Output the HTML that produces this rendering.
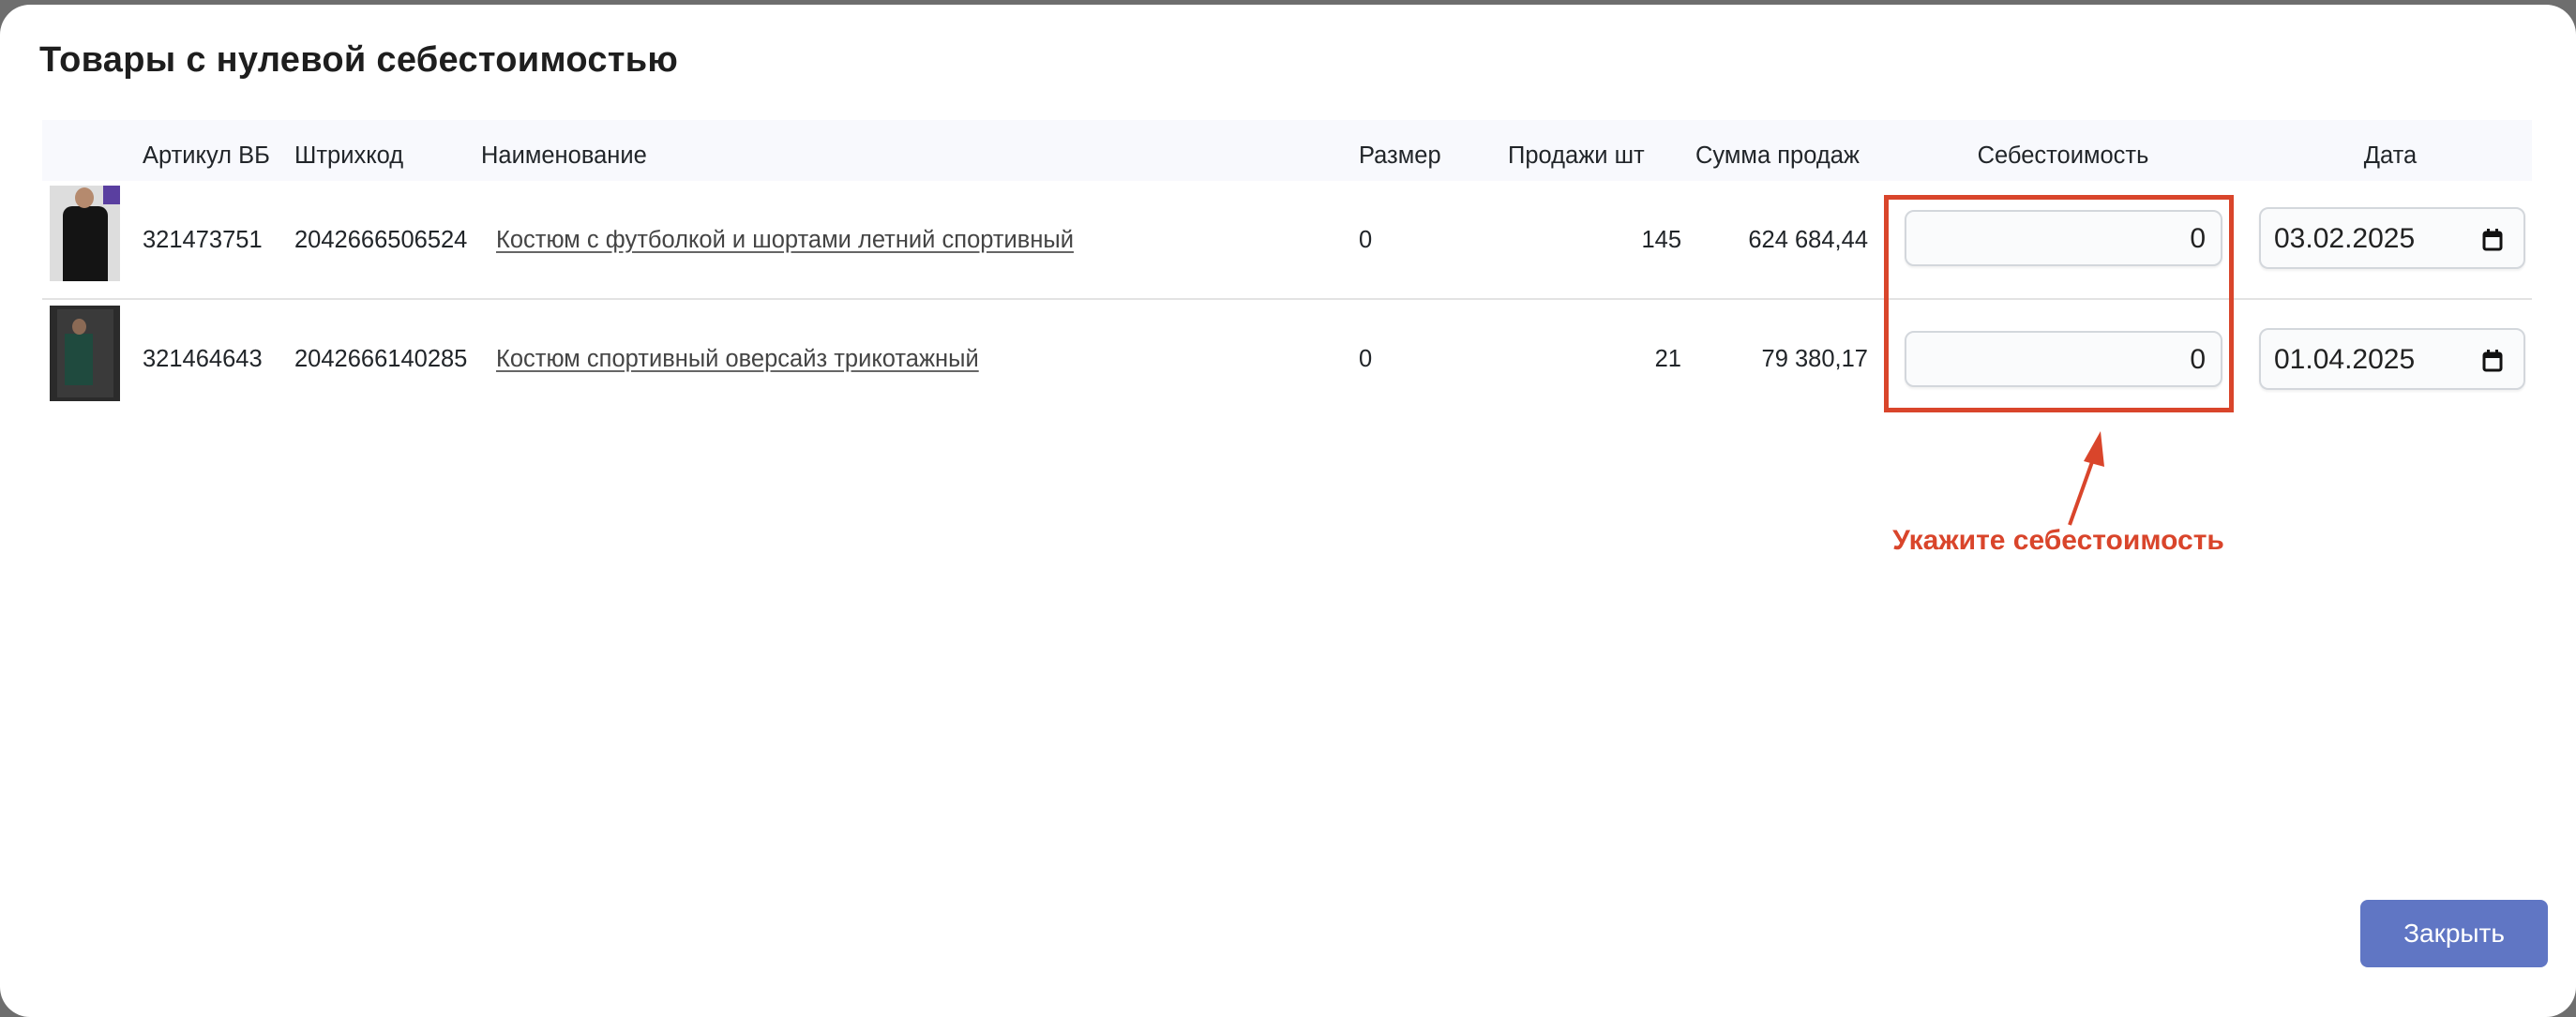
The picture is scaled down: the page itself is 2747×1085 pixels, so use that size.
<!DOCTYPE html>
<html><head><meta charset="utf-8"><style>
*{margin:0;padding:0;box-sizing:border-box}
body{width:2747px;height:1055px;background:#6e6e6e;font-family:"Liberation Sans",sans-serif;color:#212529;position:relative;overflow:hidden}
.modal{position:absolute;left:0;top:5px;width:2747px;height:1080px;background:#fff;border-radius:32px}
.a{position:absolute;white-space:nowrap}
.t{font-size:25.5px;line-height:30px}
.hd{position:absolute;left:45px;top:128px;width:2655px;height:65px;background:#f8f9fd}
.sep{position:absolute;left:45px;top:318px;width:2655px;height:2px;background:#e3e3e3}
.lnk{color:#444;text-decoration:underline;text-decoration-color:#666;text-underline-offset:4px}
.inp{position:absolute;border:2px solid #d3d7dc;border-radius:10px;background:#fafbfc;font-size:30px;color:#222;box-shadow:0 2px 2px rgba(0,0,0,.06)}
.img{position:absolute;background:#e9e9e9;overflow:hidden}
</style></head><body>
<div class="modal"></div>
<div class="a" style="left:42px;top:43px;font-size:38px;font-weight:bold;color:#1e1e1e;letter-spacing:0.3px">Товары с нулевой себестоимостью</div>
<div class="hd"></div>
<div class="a t" style="left:152px;top:151px">Артикул ВБ</div>
<div class="a t" style="left:314px;top:151px">Штрихкод</div>
<div class="a t" style="left:513px;top:151px">Наименование</div>
<div class="a t" style="left:1449px;top:151px">Размер</div>
<div class="a t" style="left:1608px;top:151px">Продажи шт</div>
<div class="a t" style="left:1808px;top:151px">Сумма продаж</div>
<div class="a t" style="left:2200px;top:151px;transform:translateX(-50%)">Себестоимость</div>
<div class="a t" style="left:2549px;top:151px;transform:translateX(-50%)">Дата</div>

<div class="img" style="left:53px;top:198px;width:75px;height:102px;background:#ddd">
<div style="position:absolute;left:14px;top:22px;width:48px;height:80px;background:#141414;border-radius:10px 10px 0 0"></div>
<div style="position:absolute;left:27px;top:2px;width:20px;height:22px;background:#b58a6e;border-radius:50%"></div>
<div style="position:absolute;right:0;top:0;width:18px;height:20px;background:#5a3fa0"></div>
</div>
<div class="a t" style="left:152px;top:241px">321473751</div>
<div class="a t" style="left:314px;top:241px">2042666506524</div>
<div class="a t lnk" style="left:529px;top:241px">Костюм с футболкой и шортами летний спортивный</div>
<div class="a t" style="left:1449px;top:241px">0</div>
<div class="a t" style="left:1793px;top:241px;transform:translateX(-100%)">145</div>
<div class="a t" style="left:1992px;top:241px;transform:translateX(-100%)">624 684,44</div>
<div class="inp" style="left:2031px;top:224px;width:339px;height:60px"><span class="a" style="right:16px;top:12px">0</span></div>
<div class="inp" style="left:2409px;top:221px;width:284px;height:66px"><span class="a" style="left:14px;top:15px">03.02.2025</span>
<svg class="a" style="right:22px;top:21px" width="22" height="24" viewBox="0 0 22 24"><rect x="2" y="4" width="18" height="18" rx="2" fill="none" stroke="#111" stroke-width="3"/><rect x="2" y="4" width="18" height="5" fill="#111"/><rect x="5" y="0" width="3" height="5" fill="#111"/><rect x="14" y="0" width="3" height="5" fill="#111"/></svg></div>

<div class="sep"></div>

<div class="img" style="left:53px;top:326px;width:75px;height:102px;background:#2b2b2b">
<div style="position:absolute;left:8px;top:4px;width:60px;height:94px;background:#3a3a3a"></div>
<div style="position:absolute;left:16px;top:30px;width:30px;height:55px;background:#1f4a3e"></div>
<div style="position:absolute;left:24px;top:14px;width:15px;height:17px;background:#8b6a55;border-radius:50%"></div>
</div>
<div class="a t" style="left:152px;top:368px">321464643</div>
<div class="a t" style="left:314px;top:368px">2042666140285</div>
<div class="a t lnk" style="left:529px;top:368px">Костюм спортивный оверсайз трикотажный</div>
<div class="a t" style="left:1449px;top:368px">0</div>
<div class="a t" style="left:1793px;top:368px;transform:translateX(-100%)">21</div>
<div class="a t" style="left:1992px;top:368px;transform:translateX(-100%)">79 380,17</div>
<div class="inp" style="left:2031px;top:353px;width:339px;height:60px"><span class="a" style="right:16px;top:12px">0</span></div>
<div class="inp" style="left:2409px;top:350px;width:284px;height:66px"><span class="a" style="left:14px;top:15px">01.04.2025</span>
<svg class="a" style="right:22px;top:21px" width="22" height="24" viewBox="0 0 22 24"><rect x="2" y="4" width="18" height="18" rx="2" fill="none" stroke="#111" stroke-width="3"/><rect x="2" y="4" width="18" height="5" fill="#111"/><rect x="5" y="0" width="3" height="5" fill="#111"/><rect x="14" y="0" width="3" height="5" fill="#111"/></svg></div>

<div class="a" style="left:2009px;top:208px;width:373px;height:232px;border:5px solid #d9452b"></div>
<svg class="a" style="left:0;top:0" width="2747" height="1055"><line x1="2207" y1="560" x2="2232" y2="490" stroke="#d9452b" stroke-width="4"/><polygon points="2240,460 2222,492 2244,498" fill="#d9452b"/></svg>
<div class="a" style="left:2195px;top:560px;transform:translateX(-50%);font-size:30px;font-weight:bold;color:#d9452b">Укажите себестоимость</div>

<div class="a" style="left:2517px;top:960px;width:200px;height:72px;background:#6076c4;border-radius:8px;color:#fff;font-size:28px;text-align:center;line-height:72px">Закрыть</div>
</body></html>
